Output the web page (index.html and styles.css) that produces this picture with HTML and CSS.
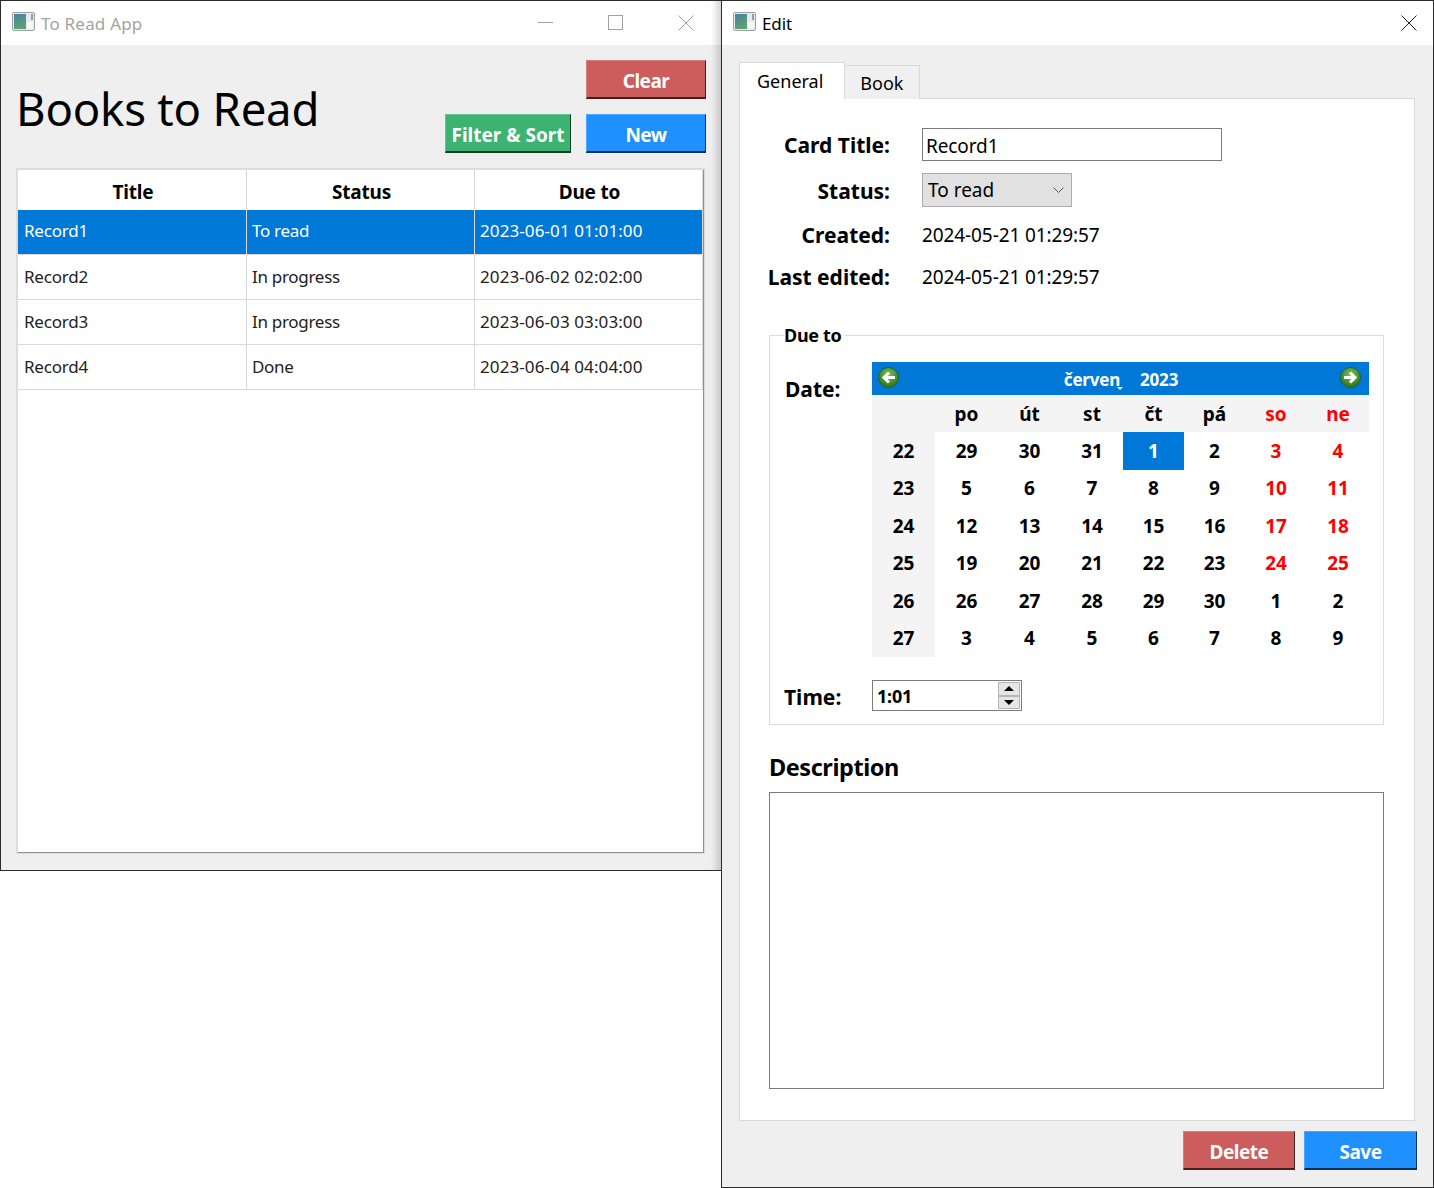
FILE: index.html
```html
<!DOCTYPE html>
<html lang="en">
<head>
    <meta charset="UTF-8" />
    <title>To Read App</title>
    <link rel="stylesheet" href="styles.css">
</head>
<body>

    <svg width="0" height="0" class="defs">
        <defs>
            <radialGradient id="arrow-fill" cx="50%" cy="35%" r="60%">
                <stop offset="0" stop-color="#7cc060" />
                <stop offset="1" stop-color="#2f7a1e" />
            </radialGradient>
            <linearGradient id="icon-fill" x1="0" y1="0" x2="0.3" y2="1">
                <stop offset="0" stop-color="#4a7fa6" />
                <stop offset="1" stop-color="#5da36f" />
            </linearGradient>
        </defs>
        <symbol id="app-icon" viewBox="0 0 23 19">
            <rect x="0.5" y="0.5" width="22" height="18" rx="1.5" fill="#e6eaec" stroke="#9aa2a6" />
            <rect x="2" y="2" width="12" height="15" fill="url(#icon-fill)" />
            <rect x="15" y="10" width="6" height="7" fill="#f6f7f7" />
            <rect x="19" y="2" width="2" height="6" fill="#7fa3b0" />
        </symbol>
    </svg>

    <div class="window main-window">
        <div class="titlebar inactive">
            <svg class="app-icon"><use href="#app-icon" /></svg>
            <span class="window-title">To Read App</span>
            <div class="window-buttons">
                <svg width="16" height="16" viewBox="0 0 16 16"><path d="M0 7.5H15" stroke="#a0a0a0" /></svg>
                <svg width="16" height="16" viewBox="0 0 16 16"><rect x="0.5" y="0.5" width="14" height="14" fill="none" stroke="#a0a0a0" /></svg>
                <svg width="16" height="16" viewBox="0 0 16 16"><path d="M0.5 0.5L15.5 15.5M15.5 0.5L0.5 15.5" stroke="#a0a0a0" /></svg>
            </div>
        </div>

        <div class="main-body">
            <div class="main-head">
                <h1>Books to Read</h1>
                <div class="main-actions">
                    <button class="btn btn-red btn-clear">Clear</button>
                    <button class="btn btn-green btn-filter">Filter &amp; Sort</button>
                    <button class="btn btn-blue btn-new">New</button>
                </div>
            </div>

            <div class="table-frame">
                <div class="table">
                    <div class="cell head">Title</div>
                    <div class="cell head">Status</div>
                    <div class="cell head">Due to</div>

                    <div class="cell selected">Record1</div>
                    <div class="cell selected status">To read</div>
                    <div class="cell selected date">2023-06-01 01:01:00</div>

                    <div class="cell">Record2</div>
                    <div class="cell status">In progress</div>
                    <div class="cell date">2023-06-02 02:02:00</div>

                    <div class="cell">Record3</div>
                    <div class="cell status">In progress</div>
                    <div class="cell date">2023-06-03 03:03:00</div>

                    <div class="cell">Record4</div>
                    <div class="cell status">Done</div>
                    <div class="cell date">2023-06-04 04:04:00</div>
                </div>
            </div>
        </div>
    </div>

    <div class="window edit-window">
        <div class="titlebar">
            <svg class="app-icon"><use href="#app-icon" /></svg>
            <span class="window-title">Edit</span>
            <div class="window-buttons">
                <svg width="16" height="16" viewBox="0 0 16 16"><path d="M0.5 0.5L15.5 15.5M15.5 0.5L0.5 15.5" stroke="#222" /></svg>
            </div>
        </div>

        <div class="edit-body">
            <div class="tabs">
                <div class="tab active">General</div>
                <div class="tab">Book</div>
            </div>

            <div class="tab-pane">
                <div class="form">
                    <label class="form-label">Card Title:</label>
                    <input class="text-input" type="text" value="Record1" />
                    <label class="form-label label-status">Status:</label>
                    <div class="combo">
                        <span>To read</span>
                        <svg width="11" height="6" viewBox="0 0 11 6"><path d="M0.5 0.5L5.5 5.5L10.5 0.5" fill="none" stroke="#555" /></svg>
                    </div>
                    <label class="form-label">Created:</label>
                    <span class="form-value">2024-05-21 01:29:57</span>
                    <label class="form-label">Last edited:</label>
                    <span class="form-value">2024-05-21 01:29:57</span>
                </div>

                <fieldset class="due-box">
                    <legend>Due to</legend>
                    <div class="date-row">
                        <span class="field-label date-label">Date:</span>
                        <div class="calendar">
                            <div class="cal-nav">
                                <svg class="cal-arrow" viewBox="0 0 21 21">
                                    <circle cx="10.5" cy="10.5" r="10" fill="url(#arrow-fill)" stroke="#2b5f1a" />
                                    <path d="M17 10.5H7M11 5.5L6 10.5L11 15.5" fill="none" stroke="#fff" stroke-width="3" />
                                </svg>
                                <div class="cal-month">
                                    <span class="cal-month-name">červen</span>
                                    <span>2023</span>
                                </div>
                                <svg class="cal-arrow" viewBox="0 0 21 21">
                                    <circle cx="10.5" cy="10.5" r="10" fill="url(#arrow-fill)" stroke="#2b5f1a" />
                                    <path d="M4 10.5H14M10 5.5L15 10.5L10 15.5" fill="none" stroke="#fff" stroke-width="3" />
                                </svg>
                            </div>
                            <div class="cal-grid" id="cal-grid"></div>
                        </div>
                    </div>
                    <div class="time-row">
                        <span class="field-label time-label">Time:</span>
                        <div class="spin">
                            <span>1:01</span>
                            <div class="spin-buttons">
                                <div class="spin-btn"><i class="tri-up"></i></div>
                                <div class="spin-btn"><i class="tri-down"></i></div>
                            </div>
                        </div>
                    </div>
                </fieldset>

                <h2>Description</h2>
                <div class="description"></div>
            </div>

            <div class="edit-actions">
                <button class="btn btn-red btn-delete">Delete</button>
                <button class="btn btn-blue btn-save">Save</button>
            </div>
        </div>
    </div>

    <script>
        // calendar: week number column + seven day columns
        const heads = ['', 'po', 'út', 'st', 'čt', 'pá', 'so', 'ne'];
        const weeks = [
            [22, 29, 30, 31, 1, 2, 3, 4],
            [23, 5, 6, 7, 8, 9, 10, 11],
            [24, 12, 13, 14, 15, 16, 17, 18],
            [25, 19, 20, 21, 22, 23, 24, 25],
            [26, 26, 27, 28, 29, 30, 1, 2],
            [27, 3, 4, 5, 6, 7, 8, 9]
        ];
        const grid = document.getElementById('cal-grid');

        function addCell(text, cls) {
            const el = document.createElement('div');
            el.className = 'cal-cell ' + cls;
            el.textContent = text;
            grid.appendChild(el);
        }

        heads.forEach((h, i) => addCell(h, 'cal-head' + (i > 5 ? ' weekend' : '')));
        weeks.forEach((week, w) => {
            week.forEach((d, i) => {
                let cls = i === 0 ? 'cal-week' : '';
                // only June's own weekend days are red, the trailing July ones are not
                if (i > 5 && w < 4) cls += ' weekend';
                if (w === 0 && i === 4) cls += ' cal-selected';
                addCell(d, cls);
            });
        });
    </script>

</body>
</html>
```

FILE: styles.css
```css
body {
    font-family: 'Noto Sans', 'Open Sans', sans-serif;
    margin: 0;
    padding: 0;
    background: white;
    color: black;
    width: 1434px;
    height: 1188px;
    position: relative;
    overflow: hidden;
}

.defs {
    position: absolute;
}

/* the two app windows sit on a free desktop */
.window {
    position: absolute;
    top: 0;
    box-sizing: border-box;
    border: 1px solid #2b2b2b;
    background: #efefef;
    display: flex;
    flex-direction: column;
}

.main-window {
    left: 0;
    width: 722px;
    height: 871px;
}

.main-window::after {
    content: '';
    position: absolute;
    top: 0;
    right: 0;
    bottom: 0;
    width: 10px;
    background: linear-gradient(to right, rgba(0, 0, 0, 0), rgba(0, 0, 0, 0.16));
}

.edit-window {
    left: 721px;
    width: 713px;
    height: 1188px;
}

.titlebar {
    height: 44px;
    background: white;
    display: flex;
    align-items: center;
    padding-left: 11px;
    font-size: 17px;
    flex-shrink: 0;
}

.titlebar.inactive {
    color: #a3a3a3;
}

.app-icon {
    width: 23px;
    height: 19px;
    margin-right: 6px;
    margin-top: -3px;
}

.window-title {
    letter-spacing: -0.1px;
}

.inactive .window-title {
    letter-spacing: 0.2px;
}

.window-buttons {
    margin-left: auto;
    display: flex;
    align-items: center;
    gap: 54px;
    padding-right: 27px;
}

.edit-window .window-buttons {
    padding-right: 16px;
}

/* main window */
.main-body {
    padding: 15px 15px 0 15px;
}

.main-head {
    display: flex;
    justify-content: space-between;
    height: 108px;
}

h1 {
    margin: 15px 0 0 0;
    font-size: 45.5px;
    font-weight: 400;
    line-height: 66px;
    letter-spacing: -0.2px;
}

.main-actions {
    display: grid;
    grid-template-columns: 126px 120px;
    grid-template-rows: 39px 39px;
    column-gap: 15px;
    row-gap: 15px;
}

.btn {
    border: none;
    border-top: 1px solid rgba(255, 255, 255, 0.2);
    border-left: 1px solid rgba(255, 255, 255, 0.2);
    border-right: 1px solid rgba(0, 0, 0, 0.65);
    border-bottom: 2px solid rgba(0, 0, 0, 0.65);
    color: white;
    font-family: inherit;
    font-size: 19px;
    font-weight: 700;
    padding: 4px 0 0 0;
    letter-spacing: -0.5px;
}

.btn-red {
    background: #cd5c5c;
}

.btn-green {
    background: #3cb371;
    letter-spacing: 0;
}

.btn-blue {
    background: #1e90ff;
}

.btn-clear {
    grid-column: 2;
    grid-row: 1;
}

.btn-filter {
    grid-column: 1;
    grid-row: 2;
}

.btn-new {
    grid-column: 2;
    grid-row: 2;
}

.table-frame {
    box-sizing: border-box;
    width: 689px;
    height: 686px;
    border: 2px solid #dcdcdc;
    border-right-width: 1px;
    border-bottom-width: 1px;
    background: white;
    position: relative;
}

.table-frame::after {
    content: '';
    position: absolute;
    top: 0;
    left: 0;
    right: 0;
    bottom: 0;
    border-right: 1px solid #8f8f98;
    border-bottom: 1px solid #8f8f98;
    pointer-events: none;
}

.table {
    display: grid;
    grid-template-columns: 229px 228px 228px;
    grid-template-rows: 40px repeat(4, 45px);
    font-size: 17px;
}

.cell {
    box-sizing: border-box;
    padding: 0 0 2px 6px;
    display: flex;
    align-items: center;
    border-right: 1px solid #d9d9d9;
    border-bottom: 1px solid #d9d9d9;
    color: #222;
    letter-spacing: -0.2px;
}

.cell.status {
    letter-spacing: -0.3px;
    padding-left: 5px;
}

.cell.date {
    letter-spacing: 0.1px;
    padding-left: 5px;
}

.cell.head {
    border-bottom: none;
    justify-content: center;
    padding: 4px 0 0 2px;
    font-size: 19px;
    font-weight: 700;
    color: black;
}

.cell.selected {
    background: #0078d7;
    color: white;
    padding-bottom: 3px;
}

/* edit window */
.edit-body {
    padding: 17px 17px 0 17px;
    display: flex;
    flex-direction: column;
}

.tabs {
    display: flex;
    align-items: flex-end;
    height: 37px;
    font-size: 18px;
    position: relative;
    z-index: 1;
    margin-bottom: -1px;
}

.tab {
    box-sizing: border-box;
    border: 1px solid #d9d9d9;
    border-bottom: none;
    height: 34px;
    padding: 0 16px 0 15px;
    display: flex;
    align-items: center;
    background: #f0f0f0;
    border-left: none;
}

.tab.active {
    background: white;
    height: 37px;
    padding: 0 21px 0 17px;
    border-left: 1px solid #d9d9d9;
}

.tab-pane {
    box-sizing: border-box;
    height: 1023px;
    width: 676px;
    background: white;
    border: 1px solid #d9d9d9;
    padding: 29px 29px 0 29px;
}

.form {
    display: grid;
    grid-template-columns: 125px 300px;
    column-gap: 32px;
    grid-template-rows: 33px 46px 56px 28px;
    align-items: center;
    font-size: 19px;
    margin-left: -4px;
}

.form-label {
    font-weight: 700;
    text-align: right;
    font-size: 21px;
    white-space: nowrap;
}

.label-status {
    align-self: end;
    padding-bottom: 2px;
}

.form-value {
    letter-spacing: -0.1px;
    grid-column: 2;
}

.text-input {
    box-sizing: border-box;
    height: 33px;
    width: 300px;
    border: 1px solid #7a7a7a;
    padding: 2px 3px 0 3px;
    font-family: inherit;
    font-size: 19px;
    letter-spacing: -0.1px;
}

.combo {
    box-sizing: border-box;
    width: 150px;
    height: 34px;
    align-self: end;
    background: #e1e1e1;
    border: 1px solid #adadad;
    display: flex;
    align-items: center;
    justify-content: space-between;
    padding: 0 7px 0 5px;
}

.due-box {
    box-sizing: border-box;
    width: 615px;
    height: 399px;
    margin: 35px 0 0 0;
    border: 1px solid #dcdcdc;
    padding: 0 14px 0 14px;
    min-width: 0;
}

legend {
    font-size: 18px;
    font-weight: 700;
    padding: 0 3px 0 0;
    margin-left: 0;
    line-height: 1;
    letter-spacing: -0.3px;
}

.date-row {
    display: flex;
    align-items: flex-start;
    margin-top: 18px;
}

.field-label {
    font-size: 21px;
    font-weight: 700;
    width: 88px;
    flex-shrink: 0;
}

.date-label {
    padding-left: 1px;
    box-sizing: border-box;
    margin-top: 13px;
}

.calendar {
    width: 497px;
}

.cal-nav {
    height: 33px;
    background: #0078d7;
    color: white;
    display: flex;
    align-items: center;
    justify-content: space-between;
    padding: 0 8px 2px 6px;
    box-sizing: border-box;
    font-size: 17px;
    font-weight: 700;
    letter-spacing: -0.2px;
}

.cal-arrow {
    width: 21px;
    height: 21px;
    flex-shrink: 0;
}

.cal-month {
    display: flex;
    gap: 20px;
    margin-left: 3px;
    margin-top: 4px;
}

.cal-month-name {
    position: relative;
}

.cal-month-name::after {
    content: '';
    position: absolute;
    right: -3px;
    bottom: 1px;
    border: 3px solid transparent;
    border-top-color: white;
    border-bottom: none;
}

.cal-grid {
    display: grid;
    grid-template-columns: 63px 63px 63px 62px 61px 61px 62px 62px;
    grid-template-rows: 37px repeat(6, 37.5px);
    font-size: 19px;
    font-weight: 700;
}

.cal-cell {
    display: flex;
    align-items: center;
    justify-content: center;
}

.cal-head {
    background: #f4f4f4;
}

.cal-week {
    background: #f4f4f4;
}

.weekend {
    color: red;
}

.cal-selected {
    background: #0078d7;
    color: white;
}

.time-row {
    display: flex;
    align-items: center;
    margin-top: 23px;
}

.time-label {
    margin-top: 2px;
}

.spin {
    box-sizing: border-box;
    width: 150px;
    height: 31px;
    border: 1px solid #7a7a7a;
    display: flex;
    align-items: center;
    justify-content: space-between;
    padding: 0 1px 0 4px;
    font-size: 18px;
    font-weight: 700;
    letter-spacing: -0.2px;
}

.spin-buttons {
    width: 22px;
    height: 27px;
    display: flex;
    flex-direction: column;
}

.spin-btn {
    flex: 1;
    background: #e6e6e6;
    border: 1px solid #b5b5b5;
    display: flex;
    align-items: center;
    justify-content: center;
}

.tri-up {
    border: 5px solid transparent;
    border-top: none;
    border-bottom-color: black;
}

.tri-down {
    border: 5px solid transparent;
    border-bottom: none;
    border-top-color: black;
}

h2 {
    margin: 25px 0 8px 0;
    font-size: 23.5px;
    line-height: 34px;
    font-weight: 700;
    letter-spacing: -0.45px;
}

.description {
    box-sizing: border-box;
    width: 615px;
    height: 297px;
    border: 1px solid #7a7a7a;
}

.edit-actions {
    display: flex;
    justify-content: flex-end;
    gap: 9px;
    margin-top: 10px;
    margin-right: -1px;
}

.btn-delete {
    width: 112px;
    height: 39px;
}

.btn-save {
    width: 113px;
    height: 39px;
}
```
